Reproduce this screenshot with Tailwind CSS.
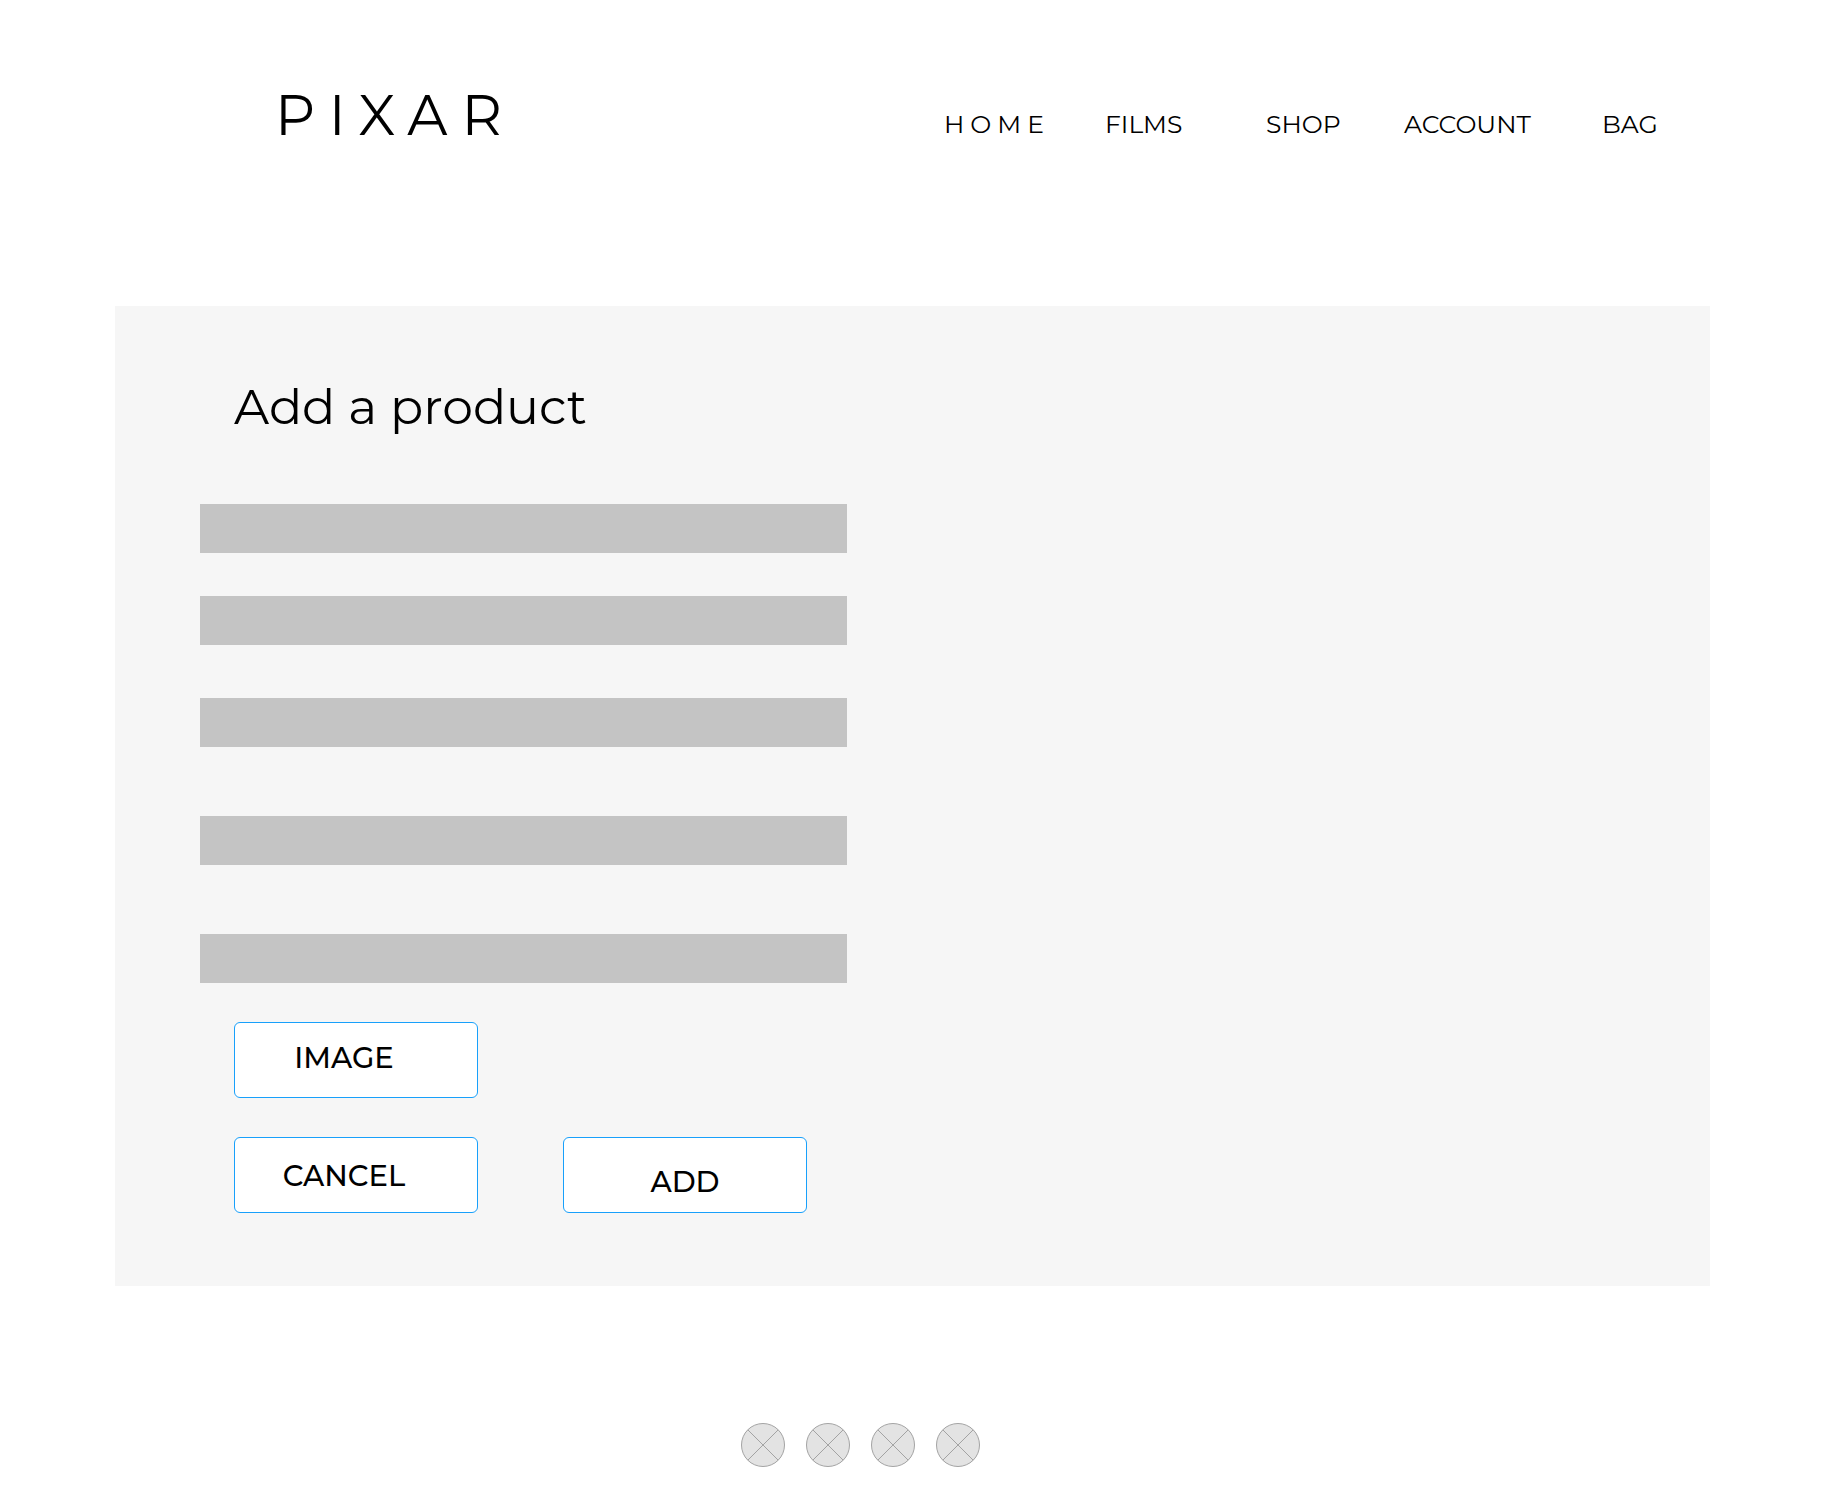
<!DOCTYPE html>
<html lang="en">
<head>
<meta charset="utf-8">
<meta name="viewport" content="width=device-width, initial-scale=1">
<title>Pixar – Add a product</title>
<script src="https://cdn.jsdelivr.net/npm/@tailwindcss/browser@4"></script>
</head>
<body class="bg-white text-black font-['Montserrat',Inter,sans-serif]">
  <header class="flex items-end pt-[81px] pl-[275px] pr-[130px]">
    <a href="#" class="w-[669px] shrink-0 text-[56px] leading-[68px] tracking-[14px]">PIXAR</a>
    <nav class="flex-1 pb-[9px]">
      <ul class="grid grid-cols-[161fr_161fr_138fr_198fr_108fr] text-[25px] leading-8">
        <li><a href="#" class="tracking-[6px]">HOME</a></li>
        <li><a href="#">FILMS</a></li>
        <li><a href="#">SHOP</a></li>
        <li><a href="#">ACCOUNT</a></li>
        <li><a href="#">BAG</a></li>
      </ul>
    </nav>
  </header>

  <main class="mt-[157px] ml-[115px] mr-[130px] bg-[#f6f6f6] pt-[69px] pb-[73px] px-[85px]">
    <h1 class="pl-[34px] text-[49px] leading-[64px]">Add a product</h1>
    <form class="mt-[65px] max-w-[647px]">
      <input type="text" aria-label="Product name" class="block h-[49px] w-full bg-[#c4c4c4] px-4 text-2xl">
      <input type="text" aria-label="Description" class="mt-[43px] block h-[49px] w-full bg-[#c4c4c4] px-4 text-2xl">
      <input type="text" aria-label="Category" class="mt-[53px] block h-[49px] w-full bg-[#c4c4c4] px-4 text-2xl">
      <input type="text" aria-label="Price" class="mt-[69px] block h-[49px] w-full bg-[#c4c4c4] px-4 text-2xl">
      <input type="text" aria-label="Stock" class="mt-[69px] block h-[49px] w-full bg-[#c4c4c4] px-4 text-2xl">
      <div class="mt-[39px] grid grid-cols-[244px_244px] gap-x-[85px] gap-y-[39px] pl-[34px] text-[29px] leading-9 font-medium">
        <button type="button" class="col-start-1 h-[76px] rounded-md border border-[#18a0fb] bg-white pr-6 pb-1">IMAGE</button>
        <button type="button" class="col-start-1 h-[76px] rounded-md border border-[#18a0fb] bg-white pt-0.5 pr-6">CANCEL</button>
        <button type="submit" class="h-[76px] rounded-md border border-[#18a0fb] bg-white pt-3.5">ADD</button>
      </div>
    </form>
  </main>

  <footer class="mt-[137px] flex justify-center gap-[21px] pr-[119px] pb-[27px]">
    <a href="#" aria-label="Social link 1"><svg class="block size-11" viewBox="0 0 44 44" fill="#e3e3e3" stroke="#a3a3a3"><circle cx="22" cy="22" r="21.5"/><path d="M6.8 6.8 37.2 37.2M37.2 6.8 6.8 37.2"/></svg></a>
    <a href="#" aria-label="Social link 2"><svg class="block size-11" viewBox="0 0 44 44" fill="#e3e3e3" stroke="#a3a3a3"><circle cx="22" cy="22" r="21.5"/><path d="M6.8 6.8 37.2 37.2M37.2 6.8 6.8 37.2"/></svg></a>
    <a href="#" aria-label="Social link 3"><svg class="block size-11" viewBox="0 0 44 44" fill="#e3e3e3" stroke="#a3a3a3"><circle cx="22" cy="22" r="21.5"/><path d="M6.8 6.8 37.2 37.2M37.2 6.8 6.8 37.2"/></svg></a>
    <a href="#" aria-label="Social link 4"><svg class="block size-11" viewBox="0 0 44 44" fill="#e3e3e3" stroke="#a3a3a3"><circle cx="22" cy="22" r="21.5"/><path d="M6.8 6.8 37.2 37.2M37.2 6.8 6.8 37.2"/></svg></a>
  </footer>
</body>
</html>
